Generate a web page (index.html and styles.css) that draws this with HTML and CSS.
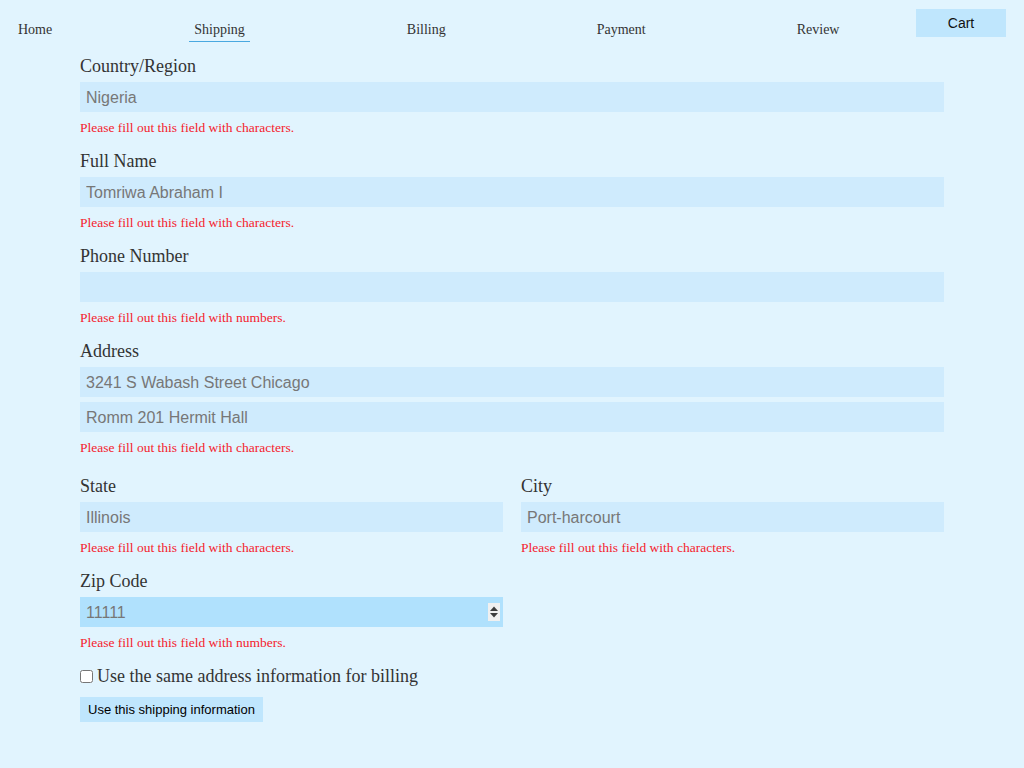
FILE: index.html
```html
<!DOCTYPE html>
<html lang="en">
<head>
<meta charset="utf-8">
<title>Shipping</title>
<link rel="stylesheet" href="styles.css">
</head>
<body>
<nav class="nav">
  <a class="nav-link nav-home" href="#">Home</a>
  <a class="nav-link nav-ship active" href="#">Shipping</a>
  <a class="nav-link nav-bill" href="#">Billing</a>
  <a class="nav-link nav-pay" href="#">Payment</a>
  <a class="nav-link nav-rev" href="#">Review</a>
  <button class="cart-btn" type="button">Cart</button>
</nav>
<form class="form">
  <div class="group">
    <label class="label">Country/Region</label>
    <input class="field" type="text" value="Nigeria">
    <p class="error">Please fill out this field with characters.</p>
  </div>
  <div class="group">
    <label class="label">Full Name</label>
    <input class="field" type="text" value="Tomriwa Abraham I">
    <p class="error">Please fill out this field with characters.</p>
  </div>
  <div class="group">
    <label class="label">Phone Number</label>
    <input class="field" type="text" value="">
    <p class="error">Please fill out this field with numbers.</p>
  </div>
  <div class="group">
    <label class="label">Address</label>
    <input class="field" type="text" value="3241 S Wabash Street Chicago">
    <input class="field field-second" type="text" value="Romm 201 Hermit Hall">
    <p class="error">Please fill out this field with characters.</p>
  </div>
  <div class="row row-first">
    <div class="group col">
      <label class="label">State</label>
      <input class="field" type="text" value="Illinois">
      <p class="error">Please fill out this field with characters.</p>
    </div>
    <div class="group col">
      <label class="label">City</label>
      <input class="field" type="text" value="Port-harcourt">
      <p class="error">Please fill out this field with characters.</p>
    </div>
  </div>
  <div class="row">
    <div class="group col">
      <label class="label">Zip Code</label>
      <div class="num-wrap">
        <input class="field field-active" type="text" value="11111">
        <span class="spinner">
          <svg width="12" height="18" viewBox="0 0 12 18"><path d="M2 8 L6 3.5 L10 8 Z" fill="#3c3c3c"/><path d="M2 10 L10 10 L6 14.5 Z" fill="#3c3c3c"/></svg>
        </span>
      </div>
      <p class="error">Please fill out this field with numbers.</p>
    </div>
    <div class="col"></div>
  </div>
  <label class="check-row"><input class="check" type="checkbox">Use the same address information for billing</label>
  <button class="submit" type="button">Use this shipping information</button>
</form>
</body>
</html>
```
FILE: styles.css
```css
html, body {
  margin: 0;
  padding: 0;
  background: #e1f4fe;
  height: 100%;
}
body {
  font-family: "Liberation Serif", "Times New Roman", serif;
  color: #333;
}
.nav {
  display: flex;
  align-items: flex-start;
  height: 42px;
  padding-top: 9px;
  box-sizing: border-box;
}
.nav-link {
  display: block;
  margin-top: 13px;
  font-size: 14px;
  line-height: 16px;
  color: #333;
  text-decoration: none;
  padding: 0 0 3px;
}
.nav-home { margin-left: 18px; }
.nav-ship { margin-left: 137px; padding: 0 5px 3px; border-bottom: 1px solid #4aa8e0; }
.nav-bill { margin-left: 157px; }
.nav-pay { margin-left: 151px; }
.nav-rev { margin-left: 151px; }
.cart-btn {
  margin-left: auto;
  margin-right: 18px;
  width: 90px;
  height: 28px;
  border: none;
  background: #bfe6fd;
  font-family: "Liberation Sans", Arial, sans-serif;
  font-size: 14px;
  color: #111;
  padding: 0;
}
.form {
  width: 864px;
  margin: 0 0 0 80px;
  padding-top: 14px;
}
.group {
  display: flex;
  flex-direction: column;
}
.label {
  font-size: 18px;
  line-height: 21px;
  color: #333;
  margin-bottom: 5px;
}
.field {
  height: 30px;
  box-sizing: border-box;
  border: none;
  outline: none;
  background: #cfebfd;
  padding: 1px 6px 0;
  font-family: "Liberation Sans", Arial, sans-serif;
  font-size: 16px;
  color: #777;
  width: 100%;
  margin: 0;
}
.field-second { margin-top: 5px; }
.field-active { background: #b0e1fd; }
.error {
  margin: 8px 0 15px;
  font-size: 13.5px;
  line-height: 16px;
  color: #f5222d;
}
.row {
  display: flex;
  gap: 18px;
}
.row-first { margin-top: 5px; }
.col { flex: 1; min-width: 0; }
.num-wrap {
  position: relative;
}
.spinner {
  position: absolute;
  right: 3px;
  top: 6px;
  width: 12px;
  height: 18px;
  background: #f0f0f0;
  display: flex;
}
.check-row {
  display: flex;
  align-items: center;
  font-size: 18px;
  line-height: 21px;
  color: #333;
  margin-top: 0;
}
.check {
  margin: 0 4px 0 0;
  width: 13px;
  height: 13px;
}
.submit {
  display: block;
  margin-top: 10px;
  height: 25px;
  padding: 0 8px;
  border: none;
  background: #bfe6fd;
  font-family: "Liberation Sans", Arial, sans-serif;
  font-size: 13px;
  color: #000;
}
```
